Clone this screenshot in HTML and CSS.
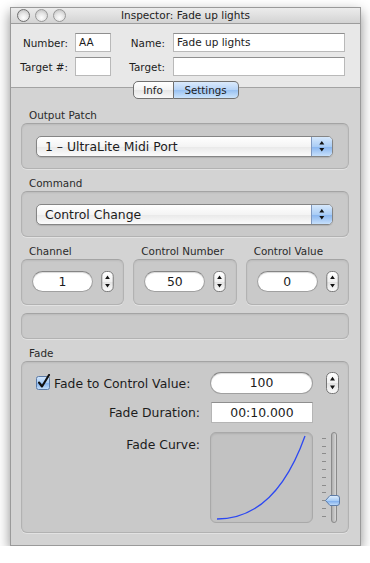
FILE: index.html
```html
<!DOCTYPE html>
<html lang="en">
<head>
  <meta charset="UTF-8" />
  <title>Inspector: Fade up lights</title>
  <link rel="stylesheet" href="styles.css">
</head>
<body>

  <div class="window">
    <div class="titlebar">
      <div class="lights"><span></span><span></span><span></span></div>
      <div class="title">Inspector: Fade up lights</div>
      <div></div>
    </div>

    <div class="header">
      <div class="lbl">Number:</div>
      <div class="field">AA</div>
      <div class="lbl lbl-2">Name:</div>
      <div class="field">Fade up lights</div>
      <div class="lbl">Target #:</div>
      <div class="field"></div>
      <div class="lbl lbl-2">Target:</div>
      <div class="field"></div>
    </div>

    <div class="content">
      <div class="tabs">
        <span class="tab tab-info">Info</span>
        <span class="tab tab-settings">Settings</span>
      </div>

      <div class="group-label">Output Patch</div>
      <div class="box box-popup">
        <div class="popup">
          <span class="popup-text">1 – UltraLite Midi Port</span>
          <span class="popup-arrows">
            <svg width="20" height="19" viewBox="0 0 20 19"><path d="M7.3 7.5h5l-2.5-3.6z M7.3 11h5l-2.5 3.6z" fill="#111"/></svg>
          </span>
        </div>
      </div>

      <div class="group-label">Command</div>
      <div class="box box-popup">
        <div class="popup">
          <span class="popup-text">Control Change</span>
          <span class="popup-arrows">
            <svg width="20" height="19" viewBox="0 0 20 19"><path d="M7.3 7.5h5l-2.5-3.6z M7.3 11h5l-2.5 3.6z" fill="#111"/></svg>
          </span>
        </div>
      </div>

      <div class="triple">
        <div class="col">
          <div class="group-label">Channel</div>
          <div class="box box-num">
            <div class="pill">1</div>
            <svg class="stepper" width="13" height="21" viewBox="0 0 13 22"><rect x="0.5" y="0.5" width="12" height="21" rx="5" fill="url(#stepg)" stroke="#767676"/><path d="M4 8.5h5l-2.5-3.7z M4 13.5h5l-2.5 3.7z" fill="#111"/></svg>
          </div>
        </div>
        <div class="col">
          <div class="group-label">Control Number</div>
          <div class="box box-num">
            <div class="pill">50</div>
            <svg class="stepper" width="13" height="21" viewBox="0 0 13 22"><rect x="0.5" y="0.5" width="12" height="21" rx="5" fill="url(#stepg)" stroke="#767676"/><path d="M4 8.5h5l-2.5-3.7z M4 13.5h5l-2.5 3.7z" fill="#111"/></svg>
          </div>
        </div>
        <div class="col">
          <div class="group-label">Control Value</div>
          <div class="box box-num">
            <div class="pill">0</div>
            <svg class="stepper" width="13" height="21" viewBox="0 0 13 22"><rect x="0.5" y="0.5" width="12" height="21" rx="5" fill="url(#stepg)" stroke="#767676"/><path d="M4 8.5h5l-2.5-3.7z M4 13.5h5l-2.5 3.7z" fill="#111"/></svg>
          </div>
        </div>
      </div>

      <div class="box box-empty"></div>

      <div class="group-label">Fade</div>
      <div class="box box-fade">
        <div class="fade-check">
          <svg class="checkbox" width="15" height="16" viewBox="0 0 15 16">
            <defs>
              <linearGradient id="chkg" x1="0" y1="0" x2="0" y2="1">
                <stop offset="0" stop-color="#d5e8fd"/>
                <stop offset="0.5" stop-color="#a6cbf5"/>
                <stop offset="0.52" stop-color="#84b3ee"/>
                <stop offset="1" stop-color="#c6e1fb"/>
              </linearGradient>
            </defs>
            <rect x="0.5" y="2.5" width="13" height="13" rx="2" fill="url(#chkg)" stroke="#5b7aa6"/>
            <path d="M3 8.5 L6 12.5 L13 1" fill="none" stroke="#111" stroke-width="2.1" stroke-linecap="round" stroke-linejoin="round"/>
          </svg>
          <span>Fade to Control Value:</span>
        </div>
        <div class="pill pill-wide">100</div>
        <svg class="stepper stepper-fade" width="13" height="22" viewBox="0 0 13 22"><rect x="0.5" y="0.5" width="12" height="21" rx="5" fill="url(#stepg)" stroke="#767676"/><path d="M4 8.5h5l-2.5-3.7z M4 13.5h5l-2.5 3.7z" fill="#111"/></svg>

        <div class="fade-lbl">Fade Duration:</div>
        <div class="duration">00:10.000</div>
        <div></div>

        <div class="fade-lbl fade-lbl-top">Fade Curve:</div>
        <div class="curve">
          <svg width="101" height="88" viewBox="1 1 101 88">
            <path d="M7 87 C 45 87, 75 60, 95 4" fill="none" stroke="#2c48f2" stroke-width="1.3"/>
          </svg>
        </div>
        <svg class="slider" width="20" height="91" viewBox="0 0 20 91">
          <defs>
            <linearGradient id="knobg" x1="0" y1="0" x2="0" y2="1">
              <stop offset="0" stop-color="#e3f0fd"/>
              <stop offset="0.5" stop-color="#a9cdf6"/>
              <stop offset="0.55" stop-color="#7eaeed"/>
              <stop offset="1" stop-color="#c4defa"/>
            </linearGradient>
            <linearGradient id="trackg" x1="0" y1="0" x2="1" y2="0">
              <stop offset="0" stop-color="#a9a9a9"/>
              <stop offset="1" stop-color="#dcdcdc"/>
            </linearGradient>
          </defs>
          <g stroke="#8c8c8c" stroke-width="1">
            <path d="M0 6.5h4 M0 14.5h4 M0 21.5h4 M0 29.5h4 M0 37.5h4 M0 45.5h4 M0 53.5h4 M0 60.5h4 M0 68.5h4 M0 76.5h4 M0 84.5h4"/>
          </g>
          <rect x="9.5" y="0.5" width="5" height="90" rx="2.5" fill="url(#trackg)" stroke="#8a8a8a"/>
          <path d="M3.5 68.5 L8 63.5 H15 Q17.5 63.5 17.5 66 V71 Q17.5 73.5 15 73.5 H8 Z" fill="url(#knobg)" stroke="#5d7ca8"/>
        </svg>
      </div>
    </div>
  </div>

  <svg width="0" height="0" class="defs">
    <defs>
      <linearGradient id="stepg" x1="0" y1="0" x2="0" y2="1">
        <stop offset="0" stop-color="#ffffff"/>
        <stop offset="0.5" stop-color="#f1f1f1"/>
        <stop offset="0.52" stop-color="#e2e2e2"/>
        <stop offset="1" stop-color="#fbfbfb"/>
      </linearGradient>
    </defs>
  </svg>

</body>
</html>
```

FILE: styles.css
```css
body {
  margin: 0;
  padding: 7px 0 0 10px;
  background: #fff;
  font-family: "DejaVu Sans", sans-serif;
  color: #1c1c1c;
}

.window {
  width: 349px;
  height: 537px;
  border: 1px solid #9a9a9a;
  background: #d3d3d3;
  box-shadow: 0 5px 12px rgba(0, 0, 0, 0.45);
  display: flex;
  flex-direction: column;
}

/* title bar */

.titlebar {
  height: 15px;
  border-bottom: 1px solid #9c9c9c;
  background: linear-gradient(#ececec, #d3d3d3);
  display: grid;
  grid-template-columns: 1fr auto 1fr;
  align-items: center;
}

.lights {
  display: flex;
  gap: 5px;
  padding-left: 6px;
}

.lights span {
  width: 11px;
  height: 11px;
  border-radius: 50%;
  border: 1px solid #989898;
  background: radial-gradient(circle at 50% 70%, #fdfdfd 0%, #e6e6e6 45%, #b9b9b9 100%);
}

.lights span:first-child {
  border-color: #6f6f6f;
}

.title {
  font-size: 10.5px;
  line-height: 15px;
  color: #222;
}

/* header fields */

.header {
  height: 64px;
  box-sizing: border-box;
  padding-top: 9px;
  background: #e8e8e8;
  border-bottom: 1px solid #a3a3a3;
  display: grid;
  grid-template-columns: 64px 36px 62px 172px;
  grid-auto-rows: 19px;
  row-gap: 5px;
  align-items: center;
}

.lbl {
  font-size: 10.4px;
  text-align: right;
  padding-right: 7px;
}

.lbl-2 {
  padding-right: 8px;
}

.field {
  height: 19px;
  box-sizing: border-box;
  background: #fff;
  border: 1px solid #b9b9b9;
  border-top-color: #8f8f8f;
  font-size: 10.5px;
  line-height: 17px;
  padding-left: 3px;
}

/* lower area */

.content {
  flex: 1;
  padding: 0 11px 0 10px;
  display: flex;
  flex-direction: column;
}

.tabs {
  display: flex;
  justify-content: center;
  margin: -7px 0 2px 1px;
}

.tab {
  height: 18px;
  box-sizing: border-box;
  font-size: 10.3px;
  line-height: 16px;
  text-align: center;
  border: 1px solid #707070;
}

.tab-info {
  width: 41px;
  border-radius: 5px 0 0 5px;
  background: linear-gradient(#ffffff, #f3f3f3 50%, #e6e6e6 52%, #f8f8f8);
}

.tab-settings {
  width: 65px;
  border-left: none;
  border-radius: 0 5px 5px 0;
  background: linear-gradient(#dbeafc, #b5d3f7 50%, #99c2f2 52%, #cde4fb);
}

.group-label {
  font-size: 10.4px;
  line-height: 13px;
  color: #2a2a2a;
  margin: 8px 0 1px 8px;
}

.tabs + .group-label {
  margin-top: 8px;
}

.box {
  box-sizing: border-box;
  background: #c9c9c9;
  border: 1px solid #b2b2b2;
  border-top-color: #a4a4a4;
  border-radius: 6px;
  box-shadow: inset 0 1px 2px rgba(0, 0, 0, 0.07), 0 1px 0 rgba(255, 255, 255, 0.35);
}

.box-popup {
  height: 46px;
  padding: 12px 15px 0 14px;
}

.popup {
  height: 21px;
  box-sizing: border-box;
  border: 1px solid #858585;
  border-radius: 5px;
  background: linear-gradient(#ffffff, #f4f4f4 50%, #e9e9e9 52%, #fbfbfb);
  display: flex;
  box-shadow: 0 1px 1px rgba(0, 0, 0, 0.12);
}

.popup-text {
  flex: 1;
  font-size: 12.4px;
  line-height: 19px;
  padding-left: 8px;
}

.popup-arrows {
  width: 20px;
  border-left: 1px solid #7f98bf;
  border-radius: 0 4px 4px 0;
  background: linear-gradient(#d6e8fc, #aacdf5 50%, #88b5ef 52%, #c7e0fb);
  display: flex;
}

/* three number boxes */

.triple {
  display: grid;
  grid-template-columns: 1fr 1fr 1fr;
  column-gap: 9px;
}

.box-num {
  height: 46px;
  margin-top: 1px;
  padding: 11px 0 0 10px;
  display: flex;
  align-items: flex-start;
  gap: 8px;
}

.pill {
  width: 61px;
  height: 21px;
  box-sizing: border-box;
  background: #fff;
  border: 1px solid #a0a0a0;
  border-top-color: #858585;
  border-radius: 11px;
  box-shadow: inset 0 1px 1px rgba(0, 0, 0, 0.15);
  font-size: 12.4px;
  line-height: 19px;
  text-align: center;
}

.box-empty {
  height: 26px;
  margin-top: 8px;
}

/* fade box */

.box-fade {
  height: 172px;
  padding: 10px 0 0 0;
  display: grid;
  grid-template-columns: 188px 103px 1fr;
  grid-template-rows: 22px 21px 91px;
  row-gap: 8px;
  align-items: center;
}

.fade-check {
  display: flex;
  align-items: center;
  gap: 3px;
  padding-left: 14px;
  font-size: 12.4px;
}

.checkbox {
  margin-top: -3px;
}

.pill-wide {
  width: 103px;
  height: 22px;
  line-height: 20px;
}

.stepper-fade {
  margin-left: 13px;
}

.fade-lbl {
  font-size: 12.4px;
  text-align: right;
  padding-right: 10px;
}

.fade-lbl-top {
  align-self: start;
  padding-top: 6px;
}

.duration {
  height: 21px;
  margin-left: 1px;
  width: 102px;
  box-sizing: border-box;
  background: #fff;
  border: 1px solid #b5b5b5;
  border-top-color: #8e8e8e;
  font-size: 12.4px;
  line-height: 19px;
  text-align: center;
}

.box-fade > .fade-lbl:nth-of-type(2) {
  margin-top: 1px;
}

.curve {
  height: 91px;
  box-sizing: border-box;
  align-self: start;
  margin-top: 1px;
  background: #c2c2c2;
  border: 1px solid #a9a9a9;
  border-radius: 6px;
  box-shadow: inset 0 1px 2px rgba(0, 0, 0, 0.1);
}

.curve svg {
  display: block;
}

.slider {
  align-self: start;
  margin: 1px 0 0 9px;
}

.defs {
  position: absolute;
}
```
